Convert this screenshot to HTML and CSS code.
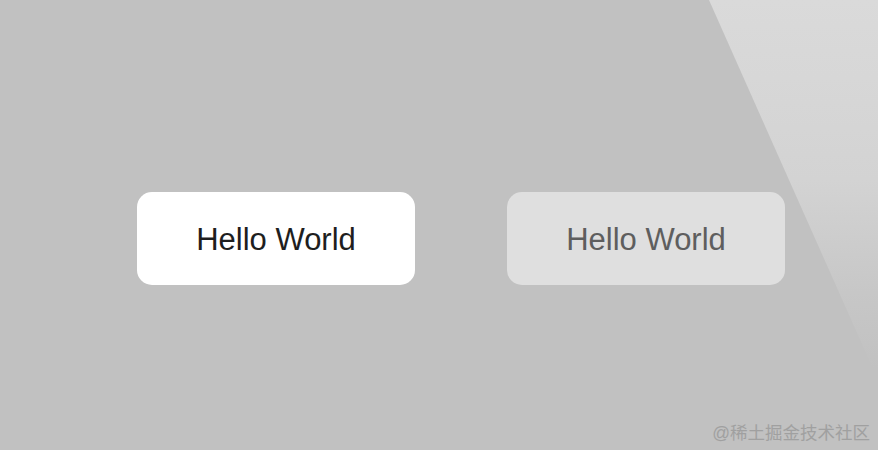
FILE: index.html
```html
<!DOCTYPE html>
<html lang="en">
<head>
    <meta charset="UTF-8">
    <meta name="viewport" content="width=device-width, initial-scale=1.0">
    <title>Hello World Buttons</title>
    <link rel="stylesheet" href="styles.css">
</head>
<body>

    <!-- Light reflection in the top right corner -->
    <div class="shine"></div>

    <div class="button-row">
        <button class="hello-button">Hello World</button>
        <button class="hello-button disabled">Hello World</button>
    </div>

    <div class="watermark">@稀土掘金技术社区</div>

</body>
</html>
```

FILE: styles.css
```css
html, body {
    height: 100%;
    margin: 0;
}

body {
    position: relative;
    overflow: hidden;
    background-color: #c1c1c1;
    font-family: "Liberation Sans", Arial, sans-serif;
}

.shine {
    position: absolute;
    top: 0;
    left: 0;
    width: 100%;
    height: 100%;
    background: linear-gradient(to bottom, #dadada 0%, #d3d3d3 40%, #c7c7c7 65%, #c1c1c1 82%);
    clip-path: polygon(709px 0, 878px 0, 878px 380px);
}

.button-row {
    position: relative;
    display: flex;
    gap: 92px;
    padding: 192px 0 0 137px;
}

.hello-button {
    width: 278px;
    height: 93px;
    border: none;
    border-radius: 15px;
    background-color: #ffffff;
    color: #1e1e1e;
    font-family: "Liberation Sans", Arial, sans-serif;
    font-size: 31px;
    padding: 2px 0 0 0;
    cursor: pointer;
}

.hello-button.disabled {
    background-color: #dfdfdf;
    color: #5e5e5e;
}

.watermark {
    position: absolute;
    right: 8px;
    bottom: 6px;
    color: #a0a0a0;
    font-size: 17.5px;
    font-family: "Liberation Sans", "Noto Sans CJK SC", sans-serif;
}
```
